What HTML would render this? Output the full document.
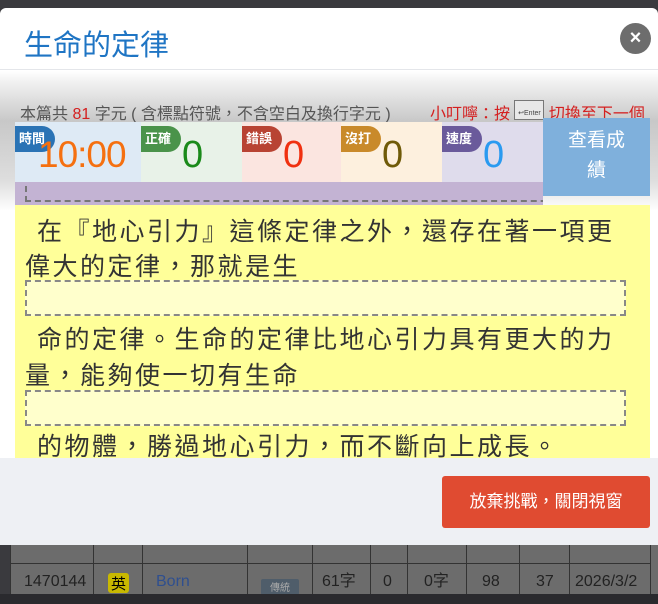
<!DOCTYPE html>
<html><head><meta charset="utf-8"><style>
*{margin:0;padding:0;box-sizing:border-box}
body{width:658px;height:604px;overflow:hidden;background:#3a3a3e;font-family:"Liberation Sans","Noto Sans CJK TC",sans-serif;position:relative}
.abs{position:absolute}
.tbl{left:10px;top:545px;width:648px;height:50px;background:#6c6c6c}
.vl{position:absolute;top:0;height:50px;width:1px;background:#333}
.modal{left:0;top:8px;width:658px;height:537px;background:#fff;border-radius:6px 6px 0 0;overflow:hidden}
.hdr{left:0;top:0;width:658px;height:62px;border-bottom:1px solid #e4e6ea}
.title{left:24px;top:14px;font-size:29px;color:#1f75c4}
.close{left:620px;top:15px;width:31px;height:31px;border-radius:50%;background:#6d6d6d;color:#fff;font-size:20px;font-weight:bold;text-align:center;line-height:30px}
.body{left:0;top:63px;width:658px;height:387px;background:linear-gradient(#fff 0,#f2f2f2 10px,#c8c8c8 50px,#dedede 110px,#fff 140px)}
.info{left:20px;top:29px;font-size:16px;color:#555;white-space:nowrap}
.tip{left:430px;top:29px;font-size:16px;color:#d42020;white-space:nowrap}
.stat{top:51px;height:60px}
.lab{position:absolute;left:0;top:4px;height:26px;padding:0 10px 0 4px;border-radius:0 13px 13px 0;color:#fff;font-size:13px;font-weight:bold;line-height:26px}
.num{position:absolute;top:12px;font-size:38px}
.yellow{left:15px;top:134px;width:635px;height:253px;background:#ffff99}
.line{position:absolute;left:10px;font-size:25px;color:#333;white-space:nowrap;letter-spacing:2.5px;line-height:34px}
.dash{position:absolute;left:10px;width:601px;height:36px;border:2px dashed #888;background:#ffffcc}
.foot{left:0;top:450px;width:658px;height:87px;background:#eef0f4}
.btn{left:442px;top:18px;width:208px;height:52px;background:#e04b31;border-radius:3px;color:#fff;font-size:17px;text-align:center;line-height:52px}
.tt{position:absolute;top:27px;font-size:16px;line-height:20px;color:#222}
</style></head><body>
<div class="abs tbl">
<div class="vl" style="left:0"></div><div class="vl" style="left:83px"></div><div class="vl" style="left:132px"></div><div class="vl" style="left:237px"></div><div class="vl" style="left:302px"></div><div class="vl" style="left:360px"></div><div class="vl" style="left:397px"></div><div class="vl" style="left:456px"></div><div class="vl" style="left:509px"></div><div class="vl" style="left:559px"></div><div class="vl" style="left:640px"></div>
<div style="position:absolute;left:0;top:18px;width:640px;height:1px;background:#333"></div>
<div class="tt" style="left:14px">1470144</div>
<div style="position:absolute;left:98px;top:28px;width:21px;height:20px;background:#c8b800;border-radius:3px;font-size:15px;text-align:center;color:#000">英</div>
<div class="tt" style="left:146px;color:#2f4f8f">Born</div>
<div style="position:absolute;left:251px;top:34px;width:38px;height:16px;background:#4f5d6a;border-radius:2px;font-size:10px;color:#aaa;text-align:center">傳統</div>
<div class="tt" style="left:312px">61字</div>
<div class="tt" style="left:373px">0</div>
<div class="tt" style="left:414px">0字</div>
<div class="tt" style="left:472px">98</div>
<div class="tt" style="left:526px">37</div>
<div class="tt" style="left:565px">2026/3/2</div>
</div>
<div class="abs" style="left:0;top:594px;width:658px;height:10px;background:#2a2a2e"></div>
<div class="abs modal">
<div class="abs hdr"><div class="abs title">生命的定律</div><div class="abs close">×</div></div>
<div class="abs body">
<div class="abs info">本篇共 <span style="color:#d42020">81</span> 字元 ( 含標點符號，不含空白及換行字元 )</div>
<div class="abs tip">小叮嚀：按 <span style="display:inline-block;width:30px;height:20px;border:1px solid #777;background:#e8e8e8;font-size:7px;color:#444;vertical-align:4px;text-align:center;line-height:26px">↩Enter</span> 切換至下一個</div>
<div class="abs" style="left:15px;top:111px;width:528px;height:23px;background:#c3b3d3;overflow:hidden"><div style="position:absolute;left:10px;top:-6px;width:601px;height:26px;border:2px dashed #777"></div></div>
<div class="abs stat" style="left:15px;width:126px;background:#deeaf5"><div class="lab" style="background:#2a73b5">時間</div><div class="num" style="left:23px;color:#f57010;font-size:37px;letter-spacing:-1px">10:00</div></div>
<div class="abs stat" style="left:141px;width:101px;background:#e8f2e8"><div class="lab" style="background:#4a934a">正確</div><div class="num" style="left:41px;color:#1a8a1a">0</div></div>
<div class="abs stat" style="left:242px;width:99px;background:#fbe5e0"><div class="lab" style="background:#b84333">錯誤</div><div class="num" style="left:41px;color:#f03010">0</div></div>
<div class="abs stat" style="left:341px;width:101px;background:#fdf0de"><div class="lab" style="background:#c98a2a">沒打</div><div class="num" style="left:41px;color:#6f5a08">0</div></div>
<div class="abs stat" style="left:442px;width:101px;background:#dfdcec"><div class="lab" style="background:#6a5a9b">速度</div><div class="num" style="left:41px;color:#2a9af0">0</div></div>
<div class="abs" style="left:543px;top:47px;width:107px;height:78px;background:#7fb0dc;color:#fff;font-size:19px;text-align:center;line-height:30px;padding-top:8px">查看成<br>績</div>
<div class="abs yellow">
<div class="line" style="top:10px;left:22px">在『地心引力』這條定律之外，還存在著一項更</div>
<div class="line" style="top:45px">偉大的定律，那就是生</div>
<div class="dash" style="top:75px"></div>
<div class="line" style="top:118px;left:22px">命的定律。生命的定律比地心引力具有更大的力</div>
<div class="line" style="top:154px">量，能夠使一切有生命</div>
<div class="dash" style="top:185px"></div>
<div class="line" style="top:225px;left:22px">的物體，勝過地心引力，而不斷向上成長。</div>
</div>
</div>
<div class="abs foot"><div class="abs btn">放棄挑戰，關閉視窗</div></div>
</div>
</body></html>
